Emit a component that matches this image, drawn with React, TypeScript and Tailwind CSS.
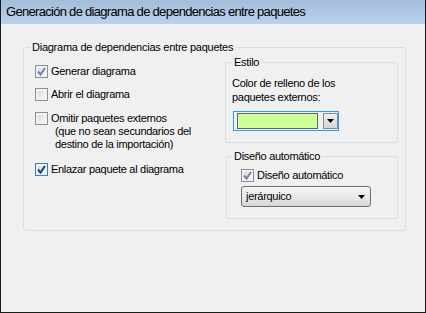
import React from "react";

const font = { fontFamily: '"Liberation Sans", Arial, sans-serif' };

function CheckBox({ checked, strong }: { checked?: boolean; strong?: boolean }) {
  return (
    <div
      className={
        "relative w-[13px] h-[13px] shrink-0 border " +
        (strong ? "border-[#3c7fb1]" : "border-[#8e8f8f]")
      }
    >
      <div className="absolute inset-[1px] border border-[#f4f4f4] bg-gradient-to-br from-[#d8d8d8] to-[#f8f8f8]" />
      {checked && (
        <svg className="absolute inset-0" width="11" height="11" viewBox="0 0 11 11">
          <path
            d="M2 5.5 L4.5 8.5 L9 2"
            fill="none"
            stroke={strong ? "#1f3a8a" : "#7085b0"}
            strokeWidth="2"
          />
        </svg>
      )}
    </div>
  );
}

function CheckRow({ label, checked, strong }: { label: React.ReactNode; checked?: boolean; strong?: boolean }) {
  return (
    <div className="flex items-start gap-[3px]">
      <CheckBox checked={checked} strong={strong} />
      <div className="text-[11px] leading-[13px] tracking-[-0.3px] text-black">{label}</div>
    </div>
  );
}

export default function App() {
  return (
    <div
      className="w-[426px] h-[313px] bg-[#f0f0f0] border-l border-r border-b border-[#1a1a1a] flex flex-col"
      style={font}
    >
      <div className="h-[24px] shrink-0 bg-gradient-to-b from-[#a3bcd9] to-[#bad2ec] flex items-center pl-[5px]">
        <span className="text-[13px] tracking-[-0.7px] text-black">
          Generación de diagrama de dependencias entre paquetes
        </span>
      </div>

      <fieldset className="mt-[16px] ml-[22px] w-[383px] h-[191px] border border-[#d5dfe5] rounded-[3px] flex">
        <legend className="ml-[6px] px-[2px] text-[11px] leading-[14px] tracking-[-0.25px] text-black">
          Diagrama de dependencias entre paquetes
        </legend>
        <div className="flex w-full">
          <div className="w-[201px] pl-[11px] pt-[11px] flex flex-col">
            <CheckRow label="Generar diagrama" checked />
            <div className="h-[10px]" />
            <CheckRow label="Abrir el diagrama" />
            <div className="h-[11px]" />
            <CheckRow
              label={
                <>
                  <div>Omitir paquetes externos</div>
                  <div className="pl-[4px]">(que no sean secundarios del</div>
                  <div className="pl-[4px]">destino de la importación)</div>
                </>
              }
            />
            <div className="h-[12px]" />
            <CheckRow label="Enlazar paquete al diagrama" checked strong />
          </div>

          <div className="flex flex-col pt-[1px]">
            <fieldset className="w-[173px] h-[88px] border border-[#d5dfe5] rounded-[3px]">
              <legend className="ml-[6px] px-[2px] text-[11px] leading-[14px] tracking-[-0.3px] text-black">Estilo</legend>
              <div className="pl-[6px] pt-[7px] text-[11px] leading-[14px] tracking-[-0.3px] text-black">
                <div>Color de relleno de los</div>
                <div>paquetes externos:</div>
              </div>
              <div className="ml-[7px] mt-[7px] w-[106px] h-[20px] border border-[#3399ff] flex items-center pl-[3px] gap-[5px]">
                <div className="w-[81px] h-[16px] border border-[#646464] bg-[#ccff99]" />
                <div className="w-[15px] h-[16px] border border-[#8a8a8a] bg-gradient-to-b from-[#f0f0f0] to-[#d4d4d4] flex items-center justify-center">
                  <svg width="7" height="4" viewBox="0 0 7 4">
                    <path d="M0 0 H7 L3.5 4 Z" fill="#000" />
                  </svg>
                </div>
              </div>
            </fieldset>
            <fieldset className="mt-[6px] w-[172px] ml-[1px] h-[70px] border border-[#d5dfe5] rounded-[3px]">
              <legend className="ml-[5px] px-[2px] text-[11px] leading-[14px] tracking-[-0.3px] text-black">Diseño automático</legend>
              <div className="pl-[14px] pt-[6px]">
                <CheckRow label="Diseño automático" checked />
                <div className="mt-[4px] w-[130px] h-[21px] rounded-[3px] border border-[#707070] bg-gradient-to-b from-[#f2f2f2] via-[#ebebeb] to-[#d6d6d6] flex items-center justify-between pl-[4px] pr-[5px]">
                  <span className="text-[11px] tracking-[-0.3px] text-black">jerárquico</span>
                  <svg width="7" height="4" viewBox="0 0 7 4">
                    <path d="M0 0 H7 L3.5 4 Z" fill="#000" />
                  </svg>
                </div>
              </div>
            </fieldset>
          </div>
        </div>
      </fieldset>
    </div>
  );
}
